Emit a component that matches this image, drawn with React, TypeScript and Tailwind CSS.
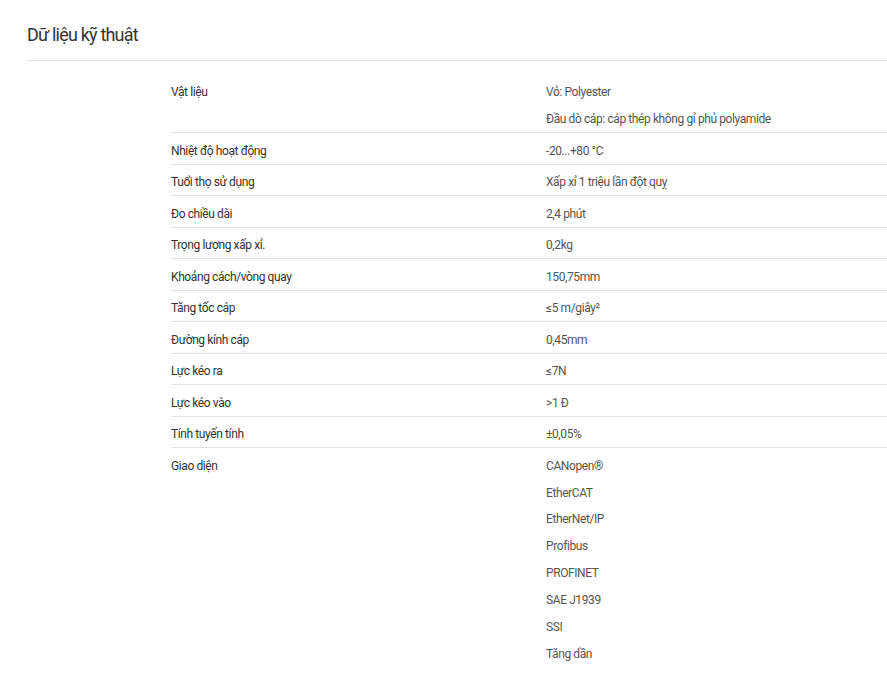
import React from "react";

const rows: { label: string; values: string[] }[] = [
  { label: "Vật liệu", values: ["Vỏ: Polyester", "Đầu dò cáp: cáp thép không gỉ phủ polyamide"] },
  { label: "Nhiệt độ hoạt động", values: ["-20...+80 °C"] },
  { label: "Tuổi thọ sử dụng", values: ["Xấp xỉ 1 triệu lần đột quỵ"] },
  { label: "Đo chiều dài", values: ["2,4 phút"] },
  { label: "Trọng lượng xấp xỉ.", values: ["0,2kg"] },
  { label: "Khoảng cách/vòng quay", values: ["150,75mm"] },
  { label: "Tăng tốc cáp", values: ["≤5 m/giây²"] },
  { label: "Đường kính cáp", values: ["0,45mm"] },
  { label: "Lực kéo ra", values: ["≤7N"] },
  { label: "Lực kéo vào", values: [">1 Đ"] },
  { label: "Tính tuyến tính", values: ["±0,05%"] },
  {
    label: "Giao diện",
    values: ["CANopen®", "EtherCAT", "EtherNet/IP", "Profibus", "PROFINET", "SAE J1939", "SSI", "Tăng dần"],
  },
];

export default function App() {
  return (
    <div className="min-h-[693px] bg-white pl-[27px]" style={{ fontFamily: "Roboto, 'Liberation Sans', sans-serif" }}>
      <h2 className="pt-[23px] pb-[14px] text-[18px] leading-[23px] tracking-[-0.8px] text-[#333] font-normal border-b border-[#e2e2e2]">
        Dữ liệu kỹ thuật
      </h2>
      <div className="pl-[144px] pt-[14px]">
        {rows.map((r, i) => (
          <div
            key={r.label}
            className={`flex text-[12px] leading-[18px] tracking-[-0.4px] pt-[8.25px] pb-[4.25px] ${i < rows.length - 1 ? "border-b border-[#e2e2e2]" : ""}`}
          >
            <div className="w-[375px] shrink-0 text-[#333]">{r.label}</div>
            <div className="flex flex-col gap-[8.9px] text-[#555]">
              {r.values.map((v) => (
                <div key={v}>{v}</div>
              ))}
            </div>
          </div>
        ))}
      </div>
    </div>
  );
}
